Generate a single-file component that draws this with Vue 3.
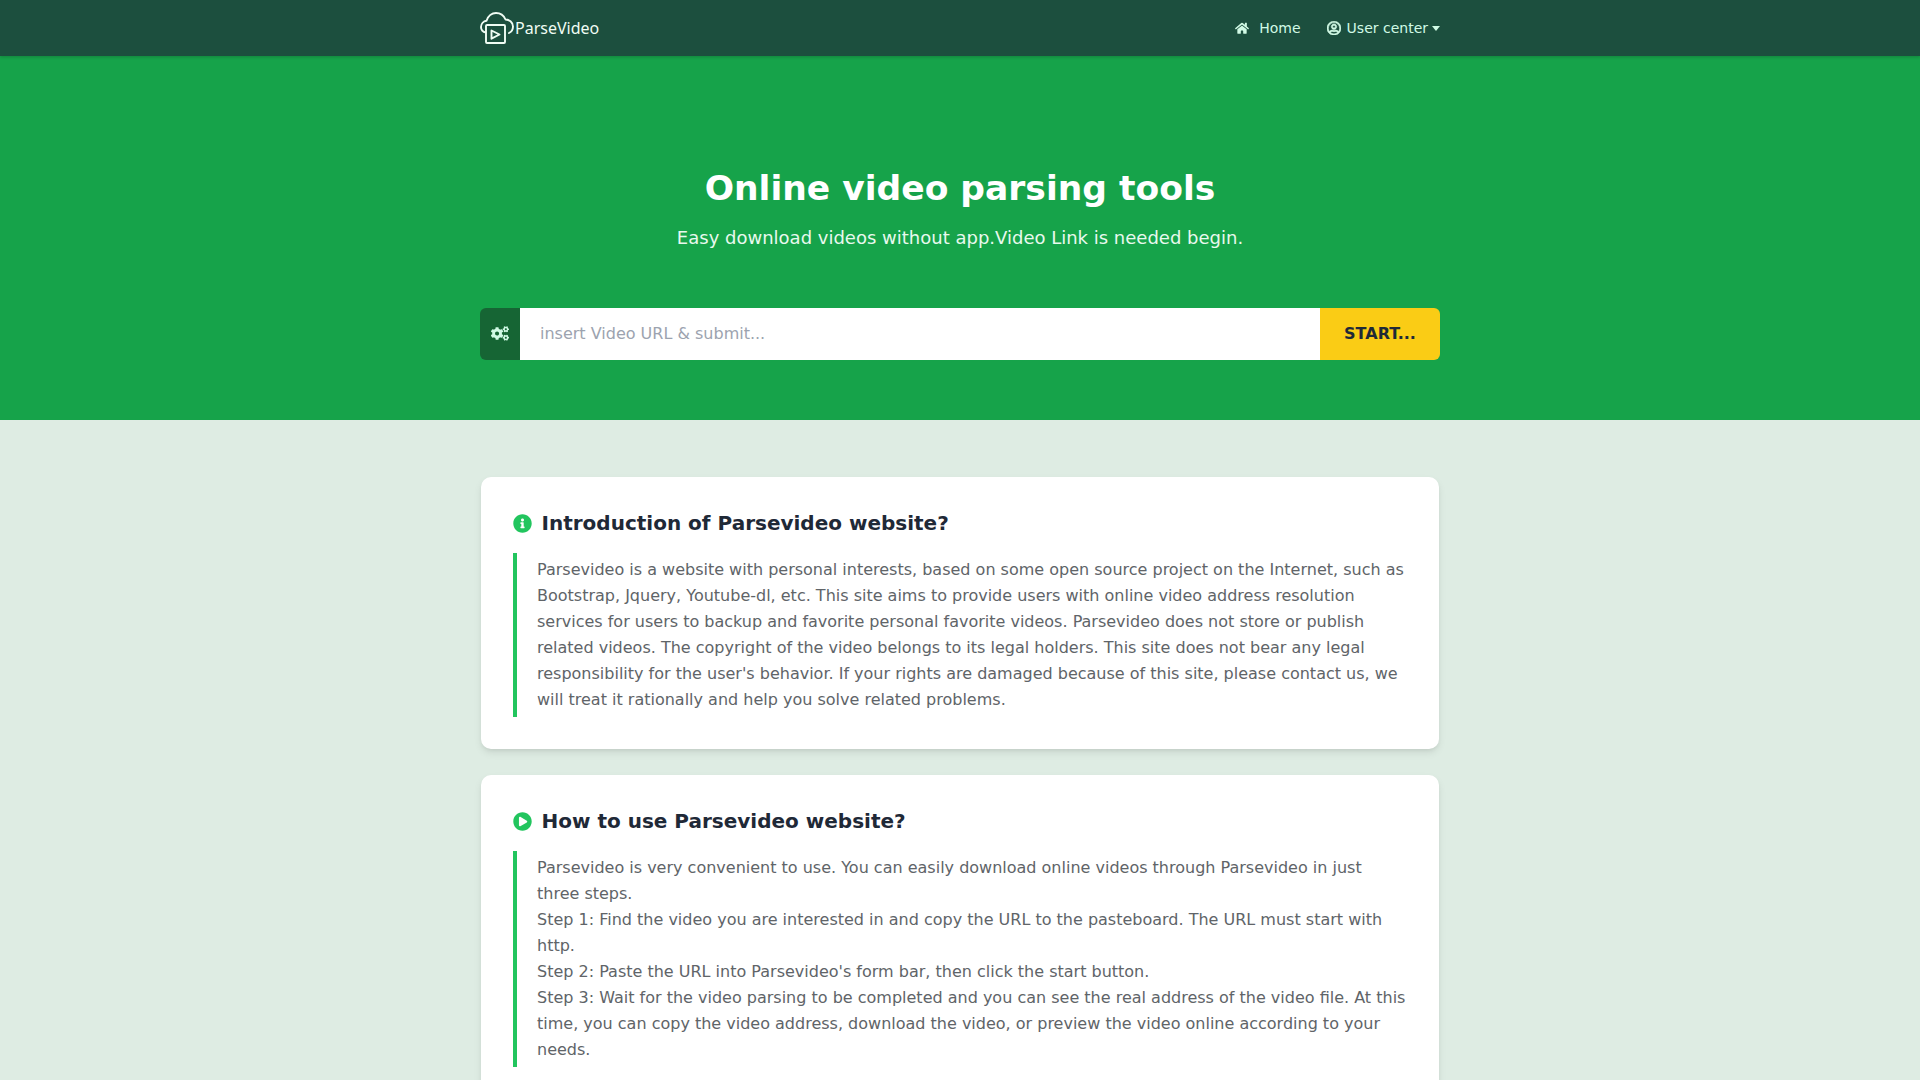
<script setup>
const intro = "Parsevideo is a website with personal interests, based on some open source project on the Internet, such as Bootstrap, Jquery, Youtube-dl, etc. This site aims to provide users with online video address resolution services for users to backup and favorite personal favorite videos. Parsevideo does not store or publish related videos. The copyright of the video belongs to its legal holders. This site does not bear any legal responsibility for the user's behavior. If your rights are damaged because of this site, please contact us, we will treat it rationally and help you solve related problems."
const steps = [
  "Parsevideo is very convenient to use. You can easily download online videos through Parsevideo in just three steps.",
  "Step 1: Find the video you are interested in and copy the URL to the pasteboard. The URL must start with http.",
  "Step 2: Paste the URL into Parsevideo's form bar, then click the start button.",
  "Step 3: Wait for the video parsing to be completed and you can see the real address of the video file. At this time, you can copy the video address, download the video, or preview the video online according to your needs."
]
</script>

<template>
  <div class="page">
    <header class="nav">
      <div class="nav-inner">
        <div class="brand">
          <svg class="logo" viewBox="0 0 34 34" fill="none" stroke="currentColor" stroke-width="1.900" stroke-linecap="round" stroke-linejoin="round">
            <path d="M6 21.500C3 21 1 18.700 1 16C1 12.700 3.500 10.200 6.500 9.800C8 5 12 2 16 2C20.500 2 24 5 25.500 8.500C29.500 8.500 33 11.500 33 15.500C33 18.500 31.500 20.800 29 22" />
            <rect x="6" y="14" width="19" height="18" rx="1" fill="#1c4f3e" />
            <path d="M11.500 19.500L19.500 23.500L11.500 27.700Z" />
          </svg>
          <span class="brand-text">ParseVideo</span>
        </div>
        <nav class="links">
          <span class="link">
            <svg class="ic-home" viewBox="0 0 576 512"><path fill="currentColor" d="M280.37 148.26L96 300.11V464a16 16 0 0 0 16 16l112.06-.29a16 16 0 0 0 15.92-16V368a16 16 0 0 1 16-16h64a16 16 0 0 1 16 16v95.64a16 16 0 0 0 16 16.05L464 480a16 16 0 0 0 16-16V300L295.67 148.26a12.19 12.19 0 0 0-15.3 0zM571.6 251.47L488 182.56V44.05a12 12 0 0 0-12-12h-56a12 12 0 0 0-12 12v72.61L318.47 43a48 48 0 0 0-61 0L4.34 251.47a12 12 0 0 0-1.6 16.9l25.5 31A12 12 0 0 0 45.15 301l235.22-193.74a12.19 12.19 0 0 1 15.3 0L530.9 301a12 12 0 0 0 16.9-1.6l25.5-31a12 12 0 0 0-1.7-16.93z"/></svg>
            Home
          </span>
          <span class="link user">
            <svg class="ic-user" viewBox="0 0 496 512"><path fill="currentColor" stroke="currentColor" stroke-width="22" d="M248 104c-53 0-96 43-96 96s43 96 96 96 96-43 96-96-43-96-96-96zm0 144c-26.5 0-48-21.5-48-48s21.5-48 48-48 48 21.5 48 48-21.5 48-48 48zm0-240C111 8 0 119 0 256s111 248 248 248 248-111 248-248S385 8 248 8zm0 448c-49.7 0-95.1-18.3-130.1-48.4 14.9-23 40.4-38.6 69.6-39.5 20.8 6.4 40.6 9.6 60.5 9.6s39.7-3.1 60.5-9.6c29.2 1 54.7 16.5 69.6 39.5-35 30.1-80.4 48.4-130.1 48.4zm162.7-84.1c-24.4-31.4-62.1-51.9-105.1-51.9-10.2 0-26 9.6-57.6 9.6-31.5 0-47.4-9.6-57.6-9.6-42.9 0-80.6 20.5-105.1 51.9C61.9 339.2 48 299.2 48 256c0-110.3 89.7-200 200-200s200 89.7 200 200c0 43.2-13.9 83.2-37.3 115.9z"/></svg>
            User center
            <i class="caret"></i>
          </span>
        </nav>
      </div>
    </header>

    <section class="hero">
      <h1>Online video parsing tools</h1>
      <p class="sub">Easy download videos without app.Video Link is needed begin.</p>
      <form class="search" @submit.prevent>
        <span class="addon">
          <svg class="ic-cogs" viewBox="0 0 640 512"><path fill="currentColor" d="M512.100 191l-8.200 14.300c-3 5.300-9.400 7.500-15.100 5.400-11.800-4.400-22.600-10.700-32.100-18.600-4.600-3.800-5.800-10.500-2.800-15.700l8.200-14.300c-6.900-8-12.300-17.300-15.900-27.400h-16.500c-6 0-11.200-4.300-12.200-10.300-2-12-2.100-24.600 0-37.100 1-6 6.200-10.400 12.200-10.400h16.500c3.600-10.100 9-19.400 15.900-27.400l-8.200-14.300c-3-5.200-1.900-11.900 2.800-15.700 9.500-7.900 20.400-14.200 32.100-18.600 5.700-2.100 12.100.1 15.100 5.400l8.200 14.300c10.500-1.900 21.200-1.900 31.700 0L552 6.300c3-5.300 9.400-7.500 15.100-5.400 11.800 4.400 22.600 10.700 32.100 18.600 4.600 3.800 5.800 10.500 2.800 15.700l-8.200 14.300c6.900 8 12.300 17.300 15.900 27.400h16.500c6 0 11.200 4.300 12.200 10.300 2 12 2.100 24.600 0 37.100-1 6-6.200 10.400-12.200 10.400h-16.500c-3.600 10.100-9 19.400-15.900 27.400l8.200 14.300c3 5.200 1.900 11.900-2.800 15.700-9.500 7.900-20.400 14.200-32.100 18.600-5.700 2.100-12.100-.1-15.100-5.400l-8.200-14.300c-10.400 1.900-21.200 1.900-31.700 0zm-10.500-58.800c38.500 29.600 82.400-14.300 52.800-52.800-38.500-29.700-82.400 14.300-52.800 52.800zM386.300 286.100l33.700 16.800c10.100 5.800 14.500 18.100 10.500 29.100-8.900 24.200-26.400 46.400-42.600 65.800-7.400 8.900-20.200 11.100-30.300 5.300l-29.100-16.800c-16 13.700-34.600 24.600-54.900 31.700v33.600c0 11.600-8.300 21.600-19.700 23.600-24.600 4.200-50.400 4.400-75.900 0-11.500-2-20-11.900-20-23.600V418c-20.300-7.200-38.900-18-54.900-31.700L74 403c-10 5.800-22.900 3.600-30.300-5.300-16.200-19.400-33.300-41.600-42.200-65.700-4-10.900.4-23.200 10.500-29.100l33.300-16.800c-3.900-20.900-3.900-42.400 0-63.400L12 205.800c-10.100-5.800-14.600-18.100-10.500-29 8.900-24.200 26-46.400 42.200-65.800 7.400-8.900 20.200-11.100 30.300-5.300l29.100 16.800c16-13.700 34.600-24.600 54.900-31.700V57.100c0-11.500 8.200-21.500 19.600-23.500 24.600-4.200 50.500-4.400 76-.1 11.500 2 20 11.900 20 23.600v33.600c20.300 7.200 38.900 18 54.900 31.700l29.100-16.800c10-5.800 22.900-3.600 30.300 5.300 16.200 19.400 33.200 41.600 42.100 65.800 4 10.900.1 23.200-10 29.100l-33.700 16.800c3.900 21 3.900 42.500 0 63.500zm-117.600 21.100c59.200-77-28.700-164.900-105.700-105.700-59.200 77 28.700 164.900 105.700 105.700zm243.400 182.700l-8.200 14.300c-3 5.300-9.400 7.500-15.100 5.400-11.800-4.400-22.600-10.700-32.100-18.600-4.600-3.800-5.800-10.500-2.800-15.700l8.200-14.300c-6.900-8-12.300-17.300-15.900-27.400h-16.500c-6 0-11.200-4.300-12.200-10.300-2-12-2.100-24.600 0-37.100 1-6 6.200-10.400 12.200-10.400h16.500c3.600-10.100 9-19.400 15.900-27.400l-8.200-14.300c-3-5.200-1.900-11.900 2.800-15.700 9.500-7.900 20.400-14.200 32.100-18.600 5.700-2.100 12.100.1 15.100 5.400l8.200 14.300c10.500-1.900 21.200-1.900 31.700 0l8.200-14.300c3-5.300 9.400-7.500 15.100-5.400 11.800 4.400 22.600 10.700 32.100 18.600 4.600 3.800 5.800 10.500 2.800 15.700l-8.200 14.300c6.900 8 12.300 17.300 15.900 27.400h16.500c6 0 11.200 4.300 12.200 10.300 2 12 2.100 24.600 0 37.100-1 6-6.200 10.400-12.200 10.400h-16.500c-3.600 10.100-9 19.400-15.900 27.400l8.200 14.300c3 5.200 1.900 11.900-2.800 15.700-9.500 7.900-20.400 14.200-32.100 18.600-5.700 2.100-12.100-.1-15.100-5.400l-8.200-14.300c-10.400 1.900-21.200 1.900-31.700 0zM501.600 431c38.500 29.600 82.400-14.300 52.800-52.800-38.500-29.600-82.400 14.300-52.800 52.800z"/></svg>
        </span>
        <input class="url" type="text" placeholder="insert Video URL & submit..." />
        <button class="start" type="submit">START...</button>
      </form>
    </section>

    <main class="content">
      <article class="card">
        <h2>
          <svg class="ic-head" viewBox="0 0 512 512"><path fill="currentColor" d="M256 8C119.043 8 8 119.083 8 256c0 136.997 111.043 248 248 248s248-111.003 248-248C504 119.083 392.957 8 256 8zm0 110c23.196 0 42 18.804 42 42s-18.804 42-42 42-42-18.804-42-42 18.804-42 42-42zm56 254c0 6.627-5.373 12-12 12h-88c-6.627 0-12-5.373-12-12v-24c0-6.627 5.373-12 12-12h12v-64h-12c-6.627 0-12-5.373-12-12v-24c0-6.627 5.373-12 12-12h64c6.627 0 12 5.373 12 12v100h12c6.627 0 12 5.373 12 12v24z"/></svg>
          Introduction of Parsevideo website?
        </h2>
        <div class="quote"><p>{{ intro }}</p></div>
      </article>
      <article class="card">
        <h2>
          <svg class="ic-head" viewBox="0 0 512 512"><path fill="currentColor" d="M256 8C119 8 8 119 8 256s111 248 248 248 248-111 248-248S393 8 256 8zm115.700 272l-176 101c-15.800 8.800-35.700-2.500-35.700-21V152c0-18.400 19.800-29.800 35.700-21l176 107c16.400 9.200 16.400 32.900 0 42z"/></svg>
          How to use Parsevideo website?
        </h2>
        <div class="quote"><p v-for="s in steps" :key="s">{{ s }}</p></div>
      </article>
    </main>
  </div>
</template>

<style>
html, body { margin: 0; background: #deece3; }
body { overflow: hidden; }
</style>

<style scoped>
.page {
  font-family: "DejaVu Sans", sans-serif;
  background: #deece3;
  min-height: 1080px;
}
.nav {
  height: 56px;
  background: #1c4f3e;
  box-shadow: 0 1px 3px rgba(0, 0, 0, .2);
  position: relative;
}
.nav-inner {
  width: 960px;
  height: 56px;
  margin: 0 auto;
  display: flex;
  align-items: center;
  justify-content: space-between;
}
.brand {
  display: flex;
  align-items: center;
  gap: 1px;
  color: #f0fdf4;
}
.logo { width: 34px; height: 34px; display: block; }
.brand-text { font-family: "Noto Sans", sans-serif; font-size: 16px; }
.links { display: flex; align-items: center; gap: 26px; color: #d1fae5; font-size: 14px; }
.link { display: flex; align-items: center; }
.ic-home { width: 14px; height: 12.500px; margin-right: 10px; }
.ic-user { width: 14px; height: 14.500px; margin-right: 6px; }
.caret {
  width: 0; height: 0;
  margin-left: 4px;
  border-left: 4.500px solid transparent;
  border-right: 4.500px solid transparent;
  border-top: 5px solid currentColor;
}
.hero {
  height: 364px;
  box-sizing: border-box;
  padding-top: 109px;
  background: #16a34a;
  text-align: center;
  color: #fff;
}
h1 { margin: 0; font-size: 34.500px; line-height: 46px; font-weight: 700; }
.sub { margin: 13px 0 0; font-size: 18px; line-height: 28px; color: #e8f9ee; }
.search {
  width: 960px;
  height: 52px;
  margin: 56px auto 0;
  display: flex;
}
.addon {
  width: 40px;
  box-sizing: border-box;
  padding-bottom: 1px;
  background: #166534;
  border-radius: 6px 0 0 6px;
  display: flex;
  align-items: center;
  justify-content: center;
  color: #d1fae5;
}
.ic-cogs { width: 18px; height: 15px; }
.url {
  flex: 1;
  min-width: 0;
  border: 0;
  outline: 0;
  padding: 0 20px 1px;
  background: #fff;
  font: 16px "DejaVu Sans", sans-serif;
  color: #374151;
}
.url::placeholder { color: #9ca3af; opacity: 1; }
.start {
  width: 120px;
  border: 0;
  padding: 0 0 1px;
  background: #facc15;
  border-radius: 0 6px 6px 0;
  font: 700 16px "DejaVu Sans", sans-serif;
  color: #1f2937;
}
.content {
  width: 958px;
  margin: 0 auto;
  padding-top: 57px;
  display: flex;
  flex-direction: column;
  gap: 26px;
}
.card {
  background: #fff;
  border-radius: 10px;
  padding: 32px;
  box-shadow: 0 4px 8px -1px rgba(0, 0, 0, .1), 0 2px 4px -1px rgba(0, 0, 0, .06);
}
h2 {
  margin: 0 0 16px;
  display: flex;
  align-items: center;
  font-size: 20px;
  line-height: 28px;
  font-weight: 700;
  color: #1f2937;
}
.ic-head { width: 19px; height: 19px; margin: 0 10px 0 -.5px; color: #22c55e; }
.quote {
  border-left: 4px solid #22c55e;
  padding: 4px 0 4px 20px;
  font-size: 16px;
  line-height: 26px;
  color: #606468;
}
.quote p { margin: 0; }
</style>
